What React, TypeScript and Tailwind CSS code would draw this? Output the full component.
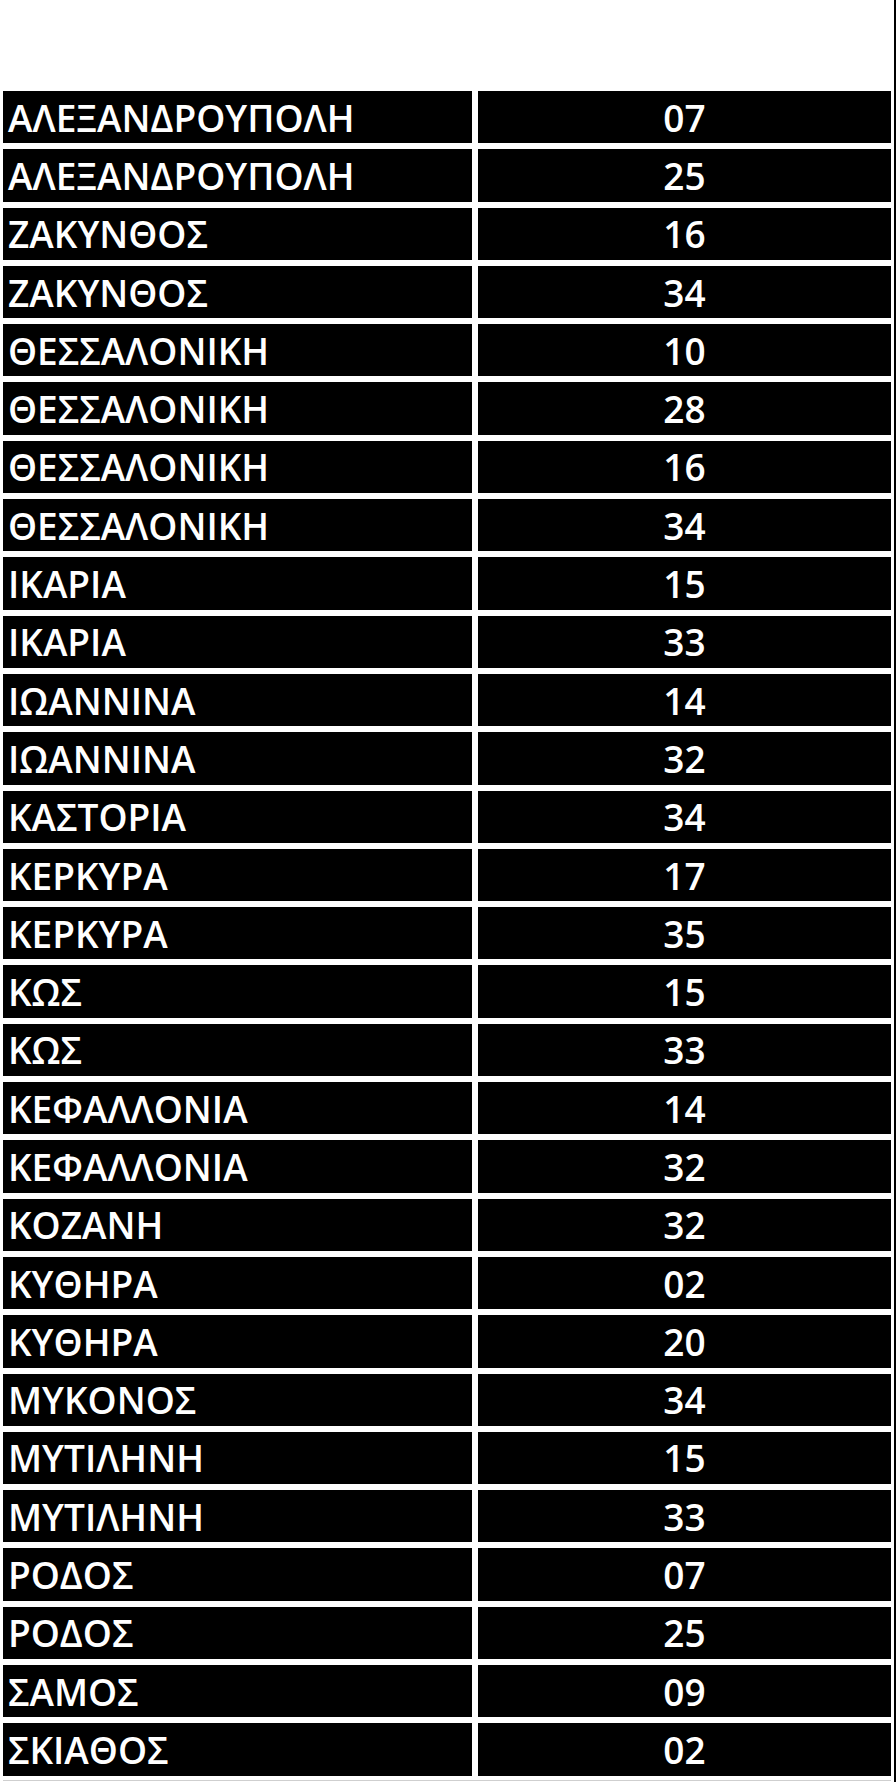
const rows: [string, string][] = [
  ["ΑΛΕΞΑΝΔΡΟΥΠΟΛΗ", "07"],
  ["ΑΛΕΞΑΝΔΡΟΥΠΟΛΗ", "25"],
  ["ΖΑΚΥΝΘΟΣ", "16"],
  ["ΖΑΚΥΝΘΟΣ", "34"],
  ["ΘΕΣΣΑΛΟΝΙΚΗ", "10"],
  ["ΘΕΣΣΑΛΟΝΙΚΗ", "28"],
  ["ΘΕΣΣΑΛΟΝΙΚΗ", "16"],
  ["ΘΕΣΣΑΛΟΝΙΚΗ", "34"],
  ["ΙΚΑΡΙΑ", "15"],
  ["ΙΚΑΡΙΑ", "33"],
  ["ΙΩΑΝΝΙΝΑ", "14"],
  ["ΙΩΑΝΝΙΝΑ", "32"],
  ["ΚΑΣΤΟΡΙΑ", "34"],
  ["ΚΕΡΚΥΡΑ", "17"],
  ["ΚΕΡΚΥΡΑ", "35"],
  ["ΚΩΣ", "15"],
  ["ΚΩΣ", "33"],
  ["ΚΕΦΑΛΛΟΝΙΑ", "14"],
  ["ΚΕΦΑΛΛΟΝΙΑ", "32"],
  ["ΚΟΖΑΝΗ", "32"],
  ["ΚΥΘΗΡΑ", "02"],
  ["ΚΥΘΗΡΑ", "20"],
  ["ΜΥΚΟΝΟΣ", "34"],
  ["ΜΥΤΙΛΗΝΗ", "15"],
  ["ΜΥΤΙΛΗΝΗ", "33"],
  ["ΡΟΔΟΣ", "07"],
  ["ΡΟΔΟΣ", "25"],
  ["ΣΑΜΟΣ", "09"],
  ["ΣΚΙΑΘΟΣ", "02"],
];

export default function App() {
  return (
    <div className="w-[896px] h-[1782px] bg-white border-r-2 border-black font-['Open_Sans',sans-serif]">
      <div className="pt-[91px] pl-[3px]">
        {/* two columns of black cells separated by white gaps */}
        <div className="grid grid-cols-[469px_413px] gap-x-[6px] gap-y-[6px] border-b border-[#cfcfcf] pb-[4px] w-[888px]">
          {rows.map(([city, num], i) => (
            <div key={i} className="contents">
              <div className="h-[52.3px] bg-black text-white flex items-center pl-[5px] text-[37px] font-semibold leading-none">
                {city}
              </div>
              <div className="h-[52.3px] bg-black text-white flex items-center justify-center text-[37px] font-semibold leading-none">
                {num}
              </div>
            </div>
          ))}
        </div>
      </div>
    </div>
  );
}
